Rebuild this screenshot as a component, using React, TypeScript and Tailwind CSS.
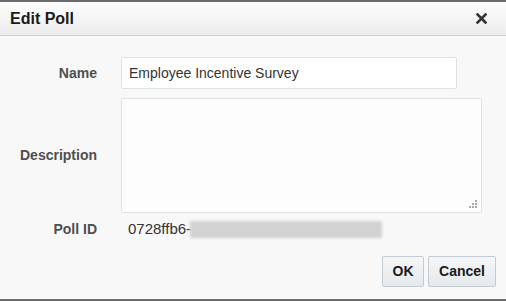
const Field = ({ label, children }: { label: string; children: React.ReactNode }) => (
  <div className="flex items-center gap-[24px]">
    <div className="w-[97px] shrink-0 text-right text-[14px] font-bold text-[#4f4f4f]">{label}</div>
    {children}
  </div>
)

export default function App() {
  return (
    <div
      className="w-[506px] h-[301px] flex flex-col bg-[#f8f8f8] border-t-2 border-b-2 border-[#6b6b6b]"
      style={{ fontFamily: '"Liberation Sans", Arial, sans-serif' }}
    >
      <div className="h-[34px] shrink-0 flex items-center justify-between pl-[10px] pr-[19px] bg-gradient-to-b from-[#fdfdfd] to-[#ececec] border-b border-[#c5d2dd]">
        <h1 className="text-[16px] font-bold text-[#1a1a1a]">Edit Poll</h1>
        <svg width="11" height="11" viewBox="0 0 11 11">
          <path d="M1.5 1.5 L9.5 9.5 M9.5 1.5 L1.5 9.5" stroke="#333" strokeWidth="2.6" strokeLinecap="square" />
        </svg>
      </div>

      <div className="flex flex-col pt-[21px] gap-[9px]">
        <Field label="Name">
          <div className="w-[336px] h-[32px] flex items-center px-[7px] bg-white border border-[#dde2e7] rounded-[2px] text-[14px] text-[#333]">
            Employee Incentive Survey
          </div>
        </Field>
        <Field label="Description">
          <div className="relative w-[361px] h-[115px] bg-[#fdfdfe] border border-[#dde2e7] rounded-[2px]">
            <div className="absolute right-[4px] bottom-[4px] grid grid-cols-3 gap-[1px]">
              <span className="size-[2px]" />
              <span className="size-[2px]" />
              <span className="size-[2px] bg-[#a9a9a9]" />
              <span className="size-[2px]" />
              <span className="size-[2px] bg-[#a9a9a9]" />
              <span className="size-[2px] bg-[#a9a9a9]" />
              <span className="size-[2px] bg-[#a9a9a9]" />
              <span className="size-[2px] bg-[#a9a9a9]" />
              <span className="size-[2px] bg-[#a9a9a9]" />
            </div>
          </div>
        </Field>
      </div>

      <div className="mt-[6px]">
        <Field label="Poll ID">
          <div className="flex items-center h-[20px] pl-[7px] text-[15px] text-[#333]">
            <span>0728ffb6-</span>
            <span className="ml-[-1px] w-[192px] h-[17px] bg-[#d2d2d2] blur-[1.5px]" />
          </div>
        </Field>
      </div>

      <div className="mt-auto mb-[12px] flex justify-end gap-[4px] pr-[10px]">
        <button className="w-[42px] h-[31px] text-[14px] font-bold text-[#1a1a1a] bg-gradient-to-b from-[#f4f6f8] to-[#e6e9ec] border border-[#c4ccd3] rounded-[2px]">
          OK
        </button>
        <button className="w-[68px] h-[31px] text-[14px] font-bold text-[#1a1a1a] bg-gradient-to-b from-[#f4f6f8] to-[#e6e9ec] border border-[#c4ccd3] rounded-[2px]">
          Cancel
        </button>
      </div>
    </div>
  )
}
